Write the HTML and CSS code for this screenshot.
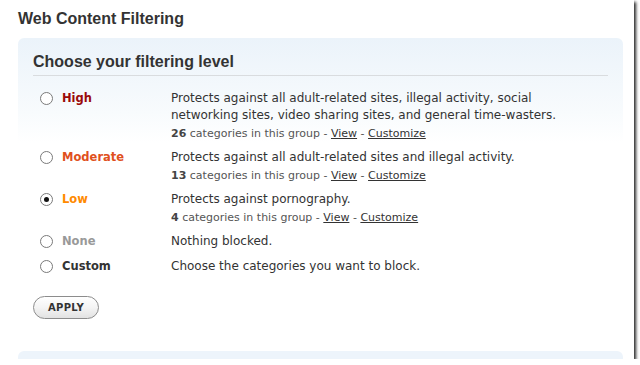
FILE: index.html
```html
<!DOCTYPE html>
<html>
<head lang="en">
    <meta charset="UTF-8">
    <title>Web Content Filtering</title>
    <link rel="stylesheet" href="styles.css">
</head>
<body>
<div id="frame">
    <h1 class="title">Web Content Filtering</h1>
    <div class="panel">
        <h2 class="panel-title">Choose your filtering level</h2>
        <ul class="levels">
            <li class="level">
                <span class="radio"></span>
                <span class="name high">High</span>
                <div class="info">
                    <p class="desc">Protects against all adult-related sites, illegal activity, social networking sites, video sharing sites, and general time-wasters.</p>
                    <p class="meta"><b>26</b> categories in this group - <a href="#">View</a> - <a href="#">Customize</a></p>
                </div>
            </li>
            <li class="level">
                <span class="radio"></span>
                <span class="name moderate">Moderate</span>
                <div class="info">
                    <p class="desc">Protects against all adult-related sites and illegal activity.</p>
                    <p class="meta"><b>13</b> categories in this group - <a href="#">View</a> - <a href="#">Customize</a></p>
                </div>
            </li>
            <li class="level">
                <span class="radio checked"></span>
                <span class="name low">Low</span>
                <div class="info">
                    <p class="desc">Protects against pornography.</p>
                    <p class="meta"><b>4</b> categories in this group - <a href="#">View</a> - <a href="#">Customize</a></p>
                </div>
            </li>
            <li class="level single">
                <span class="radio"></span>
                <span class="name none">None</span>
                <div class="info">
                    <p class="desc">Nothing blocked.</p>
                </div>
            </li>
            <li class="level single">
                <span class="radio"></span>
                <span class="name custom">Custom</span>
                <div class="info">
                    <p class="desc">Choose the categories you want to block.</p>
                </div>
            </li>
        </ul>
        <button class="apply">APPLY</button>
    </div>
    <div class="panel next"></div>
</div>
</body>
</html>
```

FILE: styles.css
```css
*{
    margin: 0;
    padding: 0;
}
body{
    background-color: #fff;
}
#frame{
    width: 634px;
    height: 359px;
    overflow: hidden;
    background-color: #fff;
    box-shadow: 2px 2px 3px rgba(0,0,0,0.85);
    font-family: "DejaVu Sans", Verdana, sans-serif;
    color: #333;
}
.title{
    font-family: "Liberation Sans", Arial, sans-serif;
    font-size: 16px;
    line-height: 20px;
    font-weight: bold;
    color: #333;
    margin: 9px 0 9px 18px;
}
.panel{
    box-sizing: border-box;
    margin: 0 11px 0 18px;
    padding: 14px 15px 0;
    height: 299px;
    border-radius: 6px 6px 0 0;
    background: linear-gradient(#ebf3fa, #f8fbfd 75px, #fff 105px);
}
.panel-title{
    font-family: "Liberation Sans", Arial, sans-serif;
    font-size: 16px;
    line-height: 20px;
    font-weight: bold;
    color: #333;
    padding-bottom: 3px;
    border-bottom: 1px solid #d9dcdf;
}
.levels{
    list-style: none;
    margin-top: 14px;
}
.level{
    display: flex;
    align-items: flex-start;
    padding-bottom: 6px;
}
.level.single{
    padding-bottom: 8px;
}
.radio{
    width: 11px;
    height: 11px;
    border: 1px solid #7a7a7a;
    border-radius: 50%;
    background-color: #fff;
    margin: 2px 9px 0 7px;
    display: flex;
    align-items: center;
    justify-content: center;
    flex-shrink: 0;
}
.radio.checked::after{
    content: "";
    width: 5px;
    height: 5px;
    border-radius: 50%;
    background-color: #111;
}
.name{
    width: 109px;
    font-size: 11.5px;
    line-height: 17px;
    font-weight: bold;
    flex-shrink: 0;
}
.high{ color: #9b0a0a; }
.moderate{ color: #e0501c; }
.low{ color: #ff8a00; }
.none{ color: #999; }
.custom{ color: #333; }
.info{
    width: 410px;
}
.desc{
    font-size: 12px;
    line-height: 17px;
    color: #333;
}
.meta{
    font-size: 11px;
    line-height: 19px;
    color: #555;
}
.meta b{
    color: #444;
}
.meta a{
    color: #333;
}
.apply{
    margin-top: 13px;
    width: 66px;
    height: 23px;
    border: 1px solid #8c8c8c;
    border-radius: 12px;
    background: linear-gradient(#fff, #f4f4f4 50%, #e2e2e2);
    font-family: "DejaVu Sans", Verdana, sans-serif;
    font-size: 10px;
    font-weight: bold;
    color: #333;
    letter-spacing: 0.3px;
}
.next{
    margin-top: 14px;
    height: 20px;
    padding: 0;
    background: #edf4fb;
}
```
